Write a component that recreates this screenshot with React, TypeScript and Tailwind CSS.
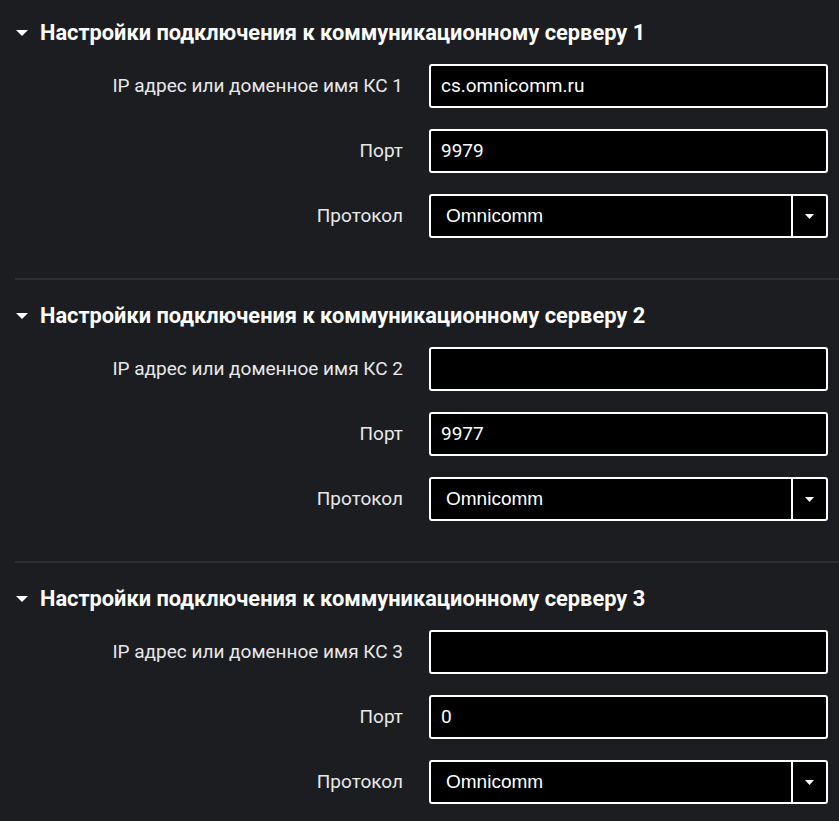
import React from "react";

const sections = [
  { n: 1, ip: "cs.omnicomm.ru", port: "9979" },
  { n: 2, ip: "", port: "9977" },
  { n: 3, ip: "", port: "0" },
];

function Row({ label, children }: { label: string; children: React.ReactNode }) {
  return (
    <div className="flex items-center h-[44px]">
      <div className="w-[403px] text-right text-[19px] text-[#e8e8e8] whitespace-nowrap">{label}</div>
      <div className="ml-[26px] w-[399px]">{children}</div>
    </div>
  );
}

function Input({ value }: { value: string }) {
  return (
    <div className="h-[44px] border-2 border-white rounded-[3px] bg-black flex items-center pl-[10px] text-[19px] text-white">
      {value}
    </div>
  );
}

function Select({ value }: { value: string }) {
  return (
    <div className="h-[44px] border-2 border-white rounded-[3px] bg-black flex items-stretch text-white">
      <div className="flex-1 flex items-center pl-[15px] text-[19px] font-['Liberation_Sans',sans-serif]">{value}</div>
      <div className="w-[2px] bg-white" />
      <div className="w-[33px] flex items-center justify-center">
        <svg width="9" height="5" viewBox="0 0 9 5"><path d="M0 0 L9 0 L4.5 5 Z" fill="white" /></svg>
      </div>
    </div>
  );
}

export default function App() {
  return (
    <div className="w-[839px] h-[821px] bg-[#1c1d21] font-['Roboto',sans-serif] overflow-hidden">
      {sections.map((s, i) => (
        <div key={s.n}>
          <div className={i === 0 ? "pt-[19px]" : "pt-[22px]"}>
            <div className="flex items-center h-[28px]">
              <svg className="ml-[16px] shrink-0" width="12" height="6" viewBox="0 0 12 6"><path d="M0 0 L12 0 L6 6 Z" fill="white" /></svg>
              <div className="ml-[12px] text-[21.8px] font-bold text-white whitespace-nowrap">
                Настройки подключения к коммуникационному серверу {s.n}
              </div>
            </div>
            <div className="mt-[17px] flex flex-col gap-[21px]">
              <Row label={`IP адрес или доменное имя КС ${s.n}`}><Input value={s.ip} /></Row>
              <Row label="Порт"><Input value={s.port} /></Row>
              <Row label="Протокол"><Select value="Omnicomm" /></Row>
            </div>
          </div>
          {i < 2 && <div className="mt-[40px] ml-[15px] h-[2px] bg-[#2e2f33]" />}
        </div>
      ))}
    </div>
  );
}
